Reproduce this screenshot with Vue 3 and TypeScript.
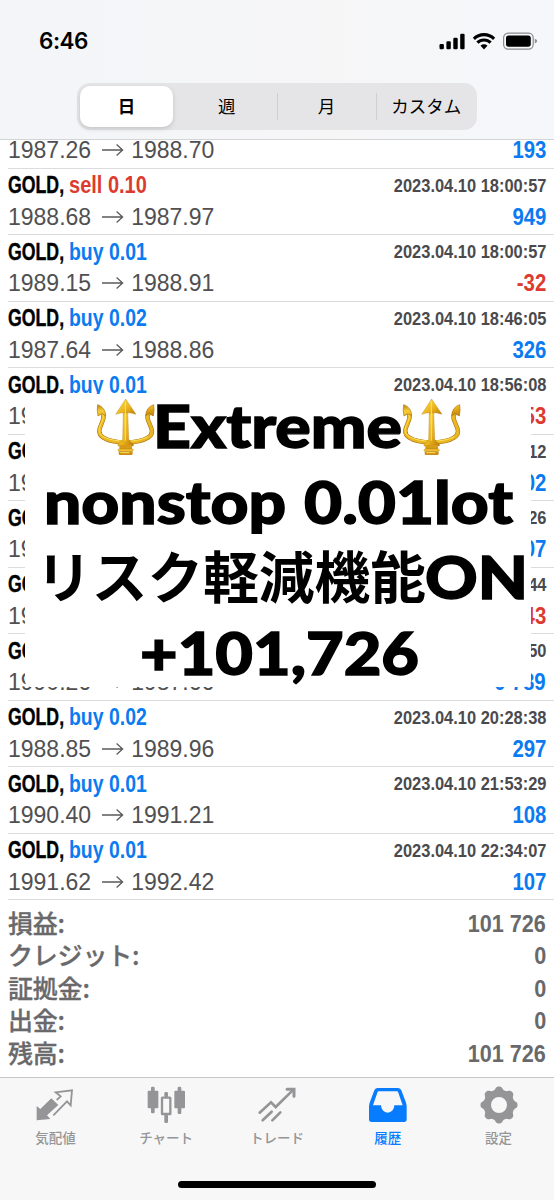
<script setup lang="ts">
interface Deal {
  side?: 'buy' | 'sell'
  lot?: string
  open: string
  close: string
  time?: string
  profit: string
}

const deals: Deal[] = [
  { open: '1987.26', close: '1988.70', profit: '193' },
  { side: 'sell', lot: '0.10', open: '1988.68', close: '1987.97', time: '2023.04.10 18:00:57', profit: '949' },
  { side: 'buy', lot: '0.01', open: '1989.15', close: '1988.91', time: '2023.04.10 18:00:57', profit: '-32' },
  { side: 'buy', lot: '0.02', open: '1987.64', close: '1988.86', time: '2023.04.10 18:46:05', profit: '326' },
  { side: 'buy', lot: '0.01', open: '1989.20', close: '1988.80', time: '2023.04.10 18:56:08', profit: '-53' },
  { side: 'buy', lot: '0.01', open: '1988.10', close: '1988.87', time: '2023.04.10 19:10:12', profit: '102' },
  { side: 'buy', lot: '0.01', open: '1988.30', close: '1989.11', time: '2023.04.10 19:24:26', profit: '107' },
  { side: 'buy', lot: '0.01', open: '1989.02', close: '1988.70', time: '2023.04.10 19:42:44', profit: '-43' },
  { side: 'sell', lot: '0.10', open: '1990.26', close: '1987.66', time: '2023.04.10 20:05:50', profit: '9 789' },
  { side: 'buy', lot: '0.02', open: '1988.85', close: '1989.96', time: '2023.04.10 20:28:38', profit: '297' },
  { side: 'buy', lot: '0.01', open: '1990.40', close: '1991.21', time: '2023.04.10 21:53:29', profit: '108' },
  { side: 'buy', lot: '0.01', open: '1991.62', close: '1992.42', time: '2023.04.10 22:34:07', profit: '107' },
]

const totals = [
  { label: '損益:', value: '101 726' },
  { label: 'クレジット:', value: '0' },
  { label: '証拠金:', value: '0' },
  { label: '出金:', value: '0' },
  { label: '残高:', value: '101 726' },
]

const periods = ['日', '週', '月', 'カスタム']

// Eight rounded teeth around the hub
const gear = (() => {
  const pts: string[] = []
  for (let i = 0; i < 160; i++) {
    const a = (i / 160) * Math.PI * 2
    const wave = Math.tanh(1.3 * Math.cos(8 * a)) / Math.tanh(1.3)
    const r = 51 + 4.5 * wave
    pts.push(`${(665 + r * Math.cos(a)).toFixed(1)} ${(120 + r * Math.sin(a)).toFixed(1)}`)
  }
  return `M${pts.join('L')}ZM689 120A24 24 0 1 0 641 120A24 24 0 1 0 689 120Z`
})()
</script>

<template>
  <div class="phone">
    <header class="top">
      <div class="status">
        <span class="clock">6:46</span>
        <svg class="indicators" width="100" height="20" viewBox="0 0 100 20">
          <rect x="0.5" y="13" width="4.4" height="5.2" rx="1.2" />
          <rect x="7.4" y="10.2" width="4.4" height="8" rx="1.2" />
          <rect x="14.3" y="6.7" width="4.4" height="11.5" rx="1.2" />
          <rect x="21.2" y="2.7" width="4.4" height="15.5" rx="1.2" />
          <path d="M45 18.4L41.5 14.8A5 5 0 0 1 48.5 14.8Z" />
          <path d="M38.4 11.7A9.4 9.4 0 0 1 51.6 11.7M34.9 7.8A14.4 14.4 0 0 1 55.1 7.8" fill="none" stroke="#000" stroke-width="3.1" />
          <rect x="64.6" y="2.1" width="29.6" height="16" rx="4.6" fill="none" stroke="#8b8b8d" stroke-width="1.2" />
          <rect x="67" y="4.5" width="24.8" height="11.2" rx="2.6" />
          <path d="M95.8 7.7Q98.2 8.7 98.2 10.1Q98.2 11.5 95.8 12.5Z" fill="#8b8b8d" />
        </svg>
      </div>
      <nav class="segments">
        <span v-for="(p, i) in periods" :key="p" class="segment" :class="{ active: i === 0, ruled: i > 1 }">{{ p }}</span>
      </nav>
    </header>

    <main class="content">
      <section class="deals">
        <article v-for="(d, i) in deals" :key="i" class="deal">
          <div v-if="d.side" class="line head">
            <span class="symbol"><b class="squeeze">GOLD,</b></span>
            <b class="squeeze order" :class="d.side">{{ d.side }} {{ d.lot }}</b>
            <b class="time">{{ d.time }}</b>
          </div>
          <div class="line prices">
            <span>{{ d.open }}</span>
            <svg class="arrow" width="23" height="14" viewBox="0 0 23 14"><path d="M1 7H21.4M15.6 1.6L21.6 7L15.6 12.4" /></svg>
            <span>{{ d.close }}</span>
            <b class="profit" :class="{ loss: d.profit.startsWith('-') }">{{ d.profit }}</b>
          </div>
        </article>
      </section>

      <section class="totals">
        <div v-for="t in totals" :key="t.label" class="total">
          <span>{{ t.label }}</span>
          <b>{{ t.value }}</b>
        </div>
      </section>
    </main>

    <footer class="tabs">
      <div class="tab">
        <svg viewBox="94 51 144 132">
          <path d="M111 123L122 132L155 100L176 120L142 151L152 162L111 166Z" fill="currentColor" />
          <path d="M171 105L183 94L168 82L217 76L213 121L202 109L161 151" fill="none" stroke="currentColor" stroke-width="5.5" />
        </svg>
        <span>気配値</span>
      </div>
      <div class="tab">
        <svg viewBox="426 51 144 132" fill="currentColor">
          <rect x="443" y="77" width="32" height="53" rx="3" /><rect x="453" y="65" width="11" height="80" rx="4" />
          <rect x="523" y="77" width="32" height="53" rx="3" /><rect x="533" y="65" width="11" height="82" rx="4" />
          <rect x="486" y="98" width="25" height="49" rx="1" fill="none" stroke="currentColor" stroke-width="7" />
          <rect x="493" y="81" width="11" height="16" rx="4" /><rect x="493" y="148" width="11" height="26" rx="4" />
        </svg>
        <span>チャート</span>
      </div>
      <div class="tab">
        <svg viewBox="24 12 144 132" fill="none" stroke="currentColor" stroke-width="8" stroke-linecap="round">
          <path d="M44 104L78 73L92 87L146 34M53 127L80 101M82 127L106 103" />
          <path d="M126 34H147V55" stroke-width="9" />
        </svg>
        <span>トレード</span>
      </div>
      <div class="tab selected">
        <svg viewBox="261 51 144 132">
          <path fill="currentColor" fill-rule="evenodd" d="M302 69H362Q370 69 373 76L386 110Q389 118 389 124V163Q389 171 381 171H284Q276 171 276 163V124Q276 118 279 110L292 76Q295 69 302 69ZM306 79Q302 79 301 83L288 121H312A20 22 0 0 0 352 121H377L364 83Q363 79 359 79Z" />
        </svg>
        <span>履歴</span>
      </div>
      <div class="tab">
        <svg viewBox="593 51 144 132"><path :d="gear" fill="currentColor" fill-rule="evenodd" /></svg>
        <span>設定</span>
      </div>
      <i class="home" />
    </footer>

    <div class="banner">
      <svg width="506" height="293" viewBox="25 394 506 293">
        <defs>
          <linearGradient id="gold" x1="0" y1="0" x2="1" y2="1">
            <stop offset="0" stop-color="#b97f0c" /><stop offset=".3" stop-color="#f6cc36" />
            <stop offset=".6" stop-color="#e9b31d" /><stop offset="1" stop-color="#ba7a08" />
          </linearGradient>
          <g id="trident">
            <path d="M36 62C56 84 6 115 40 137C70 156 144 156 174 137C208 115 156 84 178 62" fill="none" stroke="#a66b08" stroke-width="13" />
            <path d="M36 62C56 84 6 115 40 137C70 156 144 156 174 137C208 115 156 84 178 62" fill="none" stroke="#e9b624" stroke-width="10" />
            <path d="M36 64C53 84 6 112 40 134C70 152 144 152 174 134" fill="none" stroke="#ffe255" stroke-width="3" />
            <path d="M23 38Q46 46 47 71L36 65L24 72Q20 54 23 38ZM191 38Q168 46 167 71L178 65L190 72Q194 54 191 38Z" fill="url(#gold)" stroke="#ad740a" stroke-width="2" />
            <path d="M100 55H113L116 142Q120 151 130 156V162H84V156Q95 151 98 142Z" fill="url(#gold)" stroke="#a96c08" />
            <path d="M107 21L138 67Q120 60 107 63Q94 60 77 67Z" fill="url(#gold)" stroke="#b77d0b" />
            <path d="M106 28V146" stroke="#ffe25a" stroke-width="3" />
            <rect x="88" y="159" width="38" height="13" fill="#d79b17" />
            <rect x="84" y="171" width="46" height="7" rx="3" fill="#f2c431" stroke="#a96c08" />
            <rect x="86" y="178" width="42" height="11" rx="4" fill="#cb8e12" />
            <path d="M91 182H118" stroke="#ffe15a" stroke-width="3" />
          </g>
        </defs>
        <use href="#trident" transform="translate(90 392) scale(.3333)" />
        <use href="#trident" transform="translate(396 392) scale(.3333)" />
        <text x="153" y="448" textLength="249" lengthAdjust="spacingAndGlyphs">Extreme</text>
        <text x="44" y="523.5" textLength="242" lengthAdjust="spacingAndGlyphs">nonstop</text>
        <text x="304" y="523.5" textLength="209" lengthAdjust="spacingAndGlyphs">0.01lot</text>
        <text x="36" y="598" class="kana" textLength="390" lengthAdjust="spacingAndGlyphs">リスク軽減機能</text>
        <text x="425" y="598.5" textLength="103" lengthAdjust="spacingAndGlyphs">ON</text>
        <text x="140" y="674.5" textLength="279" lengthAdjust="spacingAndGlyphs">+101,726</text>
      </svg>
    </div>
  </div>
</template>

<style>
body {
  margin: 0;
}
</style>

<style scoped>
.phone {
  position: relative;
  display: flex;
  flex-direction: column;
  width: 554px;
  height: 1200px;
  overflow: hidden;
  background: #fff;
  color: #000;
  font-family: "Liberation Sans", "Noto Sans CJK JP", sans-serif;
}
.top {
  box-sizing: border-box;
  height: 140px;
  flex: none;
  background: linear-gradient(90deg, #f3f5f8, #f6f6f7 60%, #f5f7fa);
  border-bottom: 1px solid #d3d4d6;
}
.status {
  display: flex;
  justify-content: space-between;
  align-items: center;
  height: 83px;
  box-sizing: border-box;
  padding: 0 15px 2px 39px;
}
.clock {
  font: 600 22.5px/28px Inter, sans-serif;
  letter-spacing: -0.5px;
}
.segments {
  display: flex;
  box-sizing: border-box;
  width: 400px;
  height: 47px;
  margin-left: 77px;
  padding: 3px 1px 3px 3px;
  border-radius: 13px;
  background: #e5e5e7;
}
.segment {
  position: relative;
  flex: 1 1 0;
  min-width: 0;
  text-align: center;
  white-space: nowrap;
  font: 400 17.5px/40px "Noto Sans CJK JP", sans-serif;
}
.segment.active {
  flex: 0 0 93px;
  margin-right: 4px;
  border-radius: 10px;
  background: #fff;
  font-weight: 700;
  box-shadow: 0 2px 5px rgba(0, 0, 0, 0.14);
}
.segment.ruled::before {
  content: "";
  position: absolute;
  left: 0;
  top: 7px;
  width: 1px;
  height: 27px;
  background: #cfcfd2;
}
.content {
  flex: 1;
  min-height: 0;
}
.deals {
  display: flex;
  flex-direction: column;
  justify-content: flex-end;
  height: 760px;
  overflow: hidden;
}
.deal {
  box-sizing: border-box;
  flex: none;
  height: 66.5px;
  margin-left: 8px;
  padding-right: 8px;
  border-bottom: 1px solid #dcdcde;
}
.deal:first-child {
  height: 32.5px;
}
.line {
  display: flex;
  align-items: center;
  white-space: nowrap;
  font-size: 23px;
}
.head {
  height: 34px;
}
.prices {
  height: 29px;
  color: #505052;
}
.squeeze {
  display: inline-block;
  transform-origin: left center;
}
.symbol {
  width: 60.5px;
}
.symbol .squeeze {
  transform: scaleX(0.77);
  -webkit-text-stroke: 0.4px;
}
.order {
  color: #0a7bf0;
  transform: scaleX(0.845);
}
.order.sell {
  color: #dc3b30;
  transform: scaleX(0.87);
}
.time,
.profit {
  margin-left: auto;
  transform-origin: right center;
  transform: scaleX(0.865);
}
.time {
  font-size: 19px;
  color: #4a4a4e;
}
.profit {
  color: #0a7bf0;
  transform: scaleX(0.885);
}
.profit.loss {
  color: #dc3b30;
}
.arrow {
  margin: 0 7.5px 1px 9.5px;
}
.arrow path {
  fill: none;
  stroke: #5a5a5c;
  stroke-width: 1.3;
}
.totals {
  padding: 7.5px 8px 0;
  color: #69696b;
}
.total {
  display: flex;
  align-items: center;
  justify-content: space-between;
  height: 32.5px;
  font: 500 25px/32px "Noto Sans CJK JP", sans-serif;
}
.total span {
  margin-top: -4px;
  letter-spacing: -0.2px;
  -webkit-text-stroke: 0.3px;
}
.total b {
  font: 700 24px/32px "Liberation Sans", sans-serif;
  transform-origin: right center;
  transform: scaleX(0.9);
}
.tabs {
  position: relative;
  display: flex;
  box-sizing: border-box;
  flex: none;
  height: 123px;
  padding-top: 4px;
  border-top: 1px solid #c6c6c8;
  background: #f7f7f8;
}
.tab {
  display: flex;
  flex: 1;
  flex-direction: column;
  align-items: center;
  color: #959597;
  font: 500 13.5px/20px "Noto Sans CJK JP", sans-serif;
}
.tab svg {
  width: 48px;
  height: 44px;
  margin-bottom: 1px;
}
.tab.selected {
  color: #087cff;
}
.home {
  position: absolute;
  left: 178px;
  bottom: 12px;
  width: 198px;
  height: 7px;
  border-radius: 4px;
  background: #000;
}
.banner {
  position: absolute;
  left: 25px;
  top: 394px;
  width: 506px;
  height: 293px;
  border-radius: 6px;
  background: #fff;
}
.banner svg {
  display: block;
}
.banner text {
  font: 900 59px Lato, sans-serif;
  stroke: #000;
  stroke-width: 1.4px;
}
.banner .kana {
  font: 700 55.5px "Noto Sans CJK JP", sans-serif;
  stroke: none;
}
</style>
